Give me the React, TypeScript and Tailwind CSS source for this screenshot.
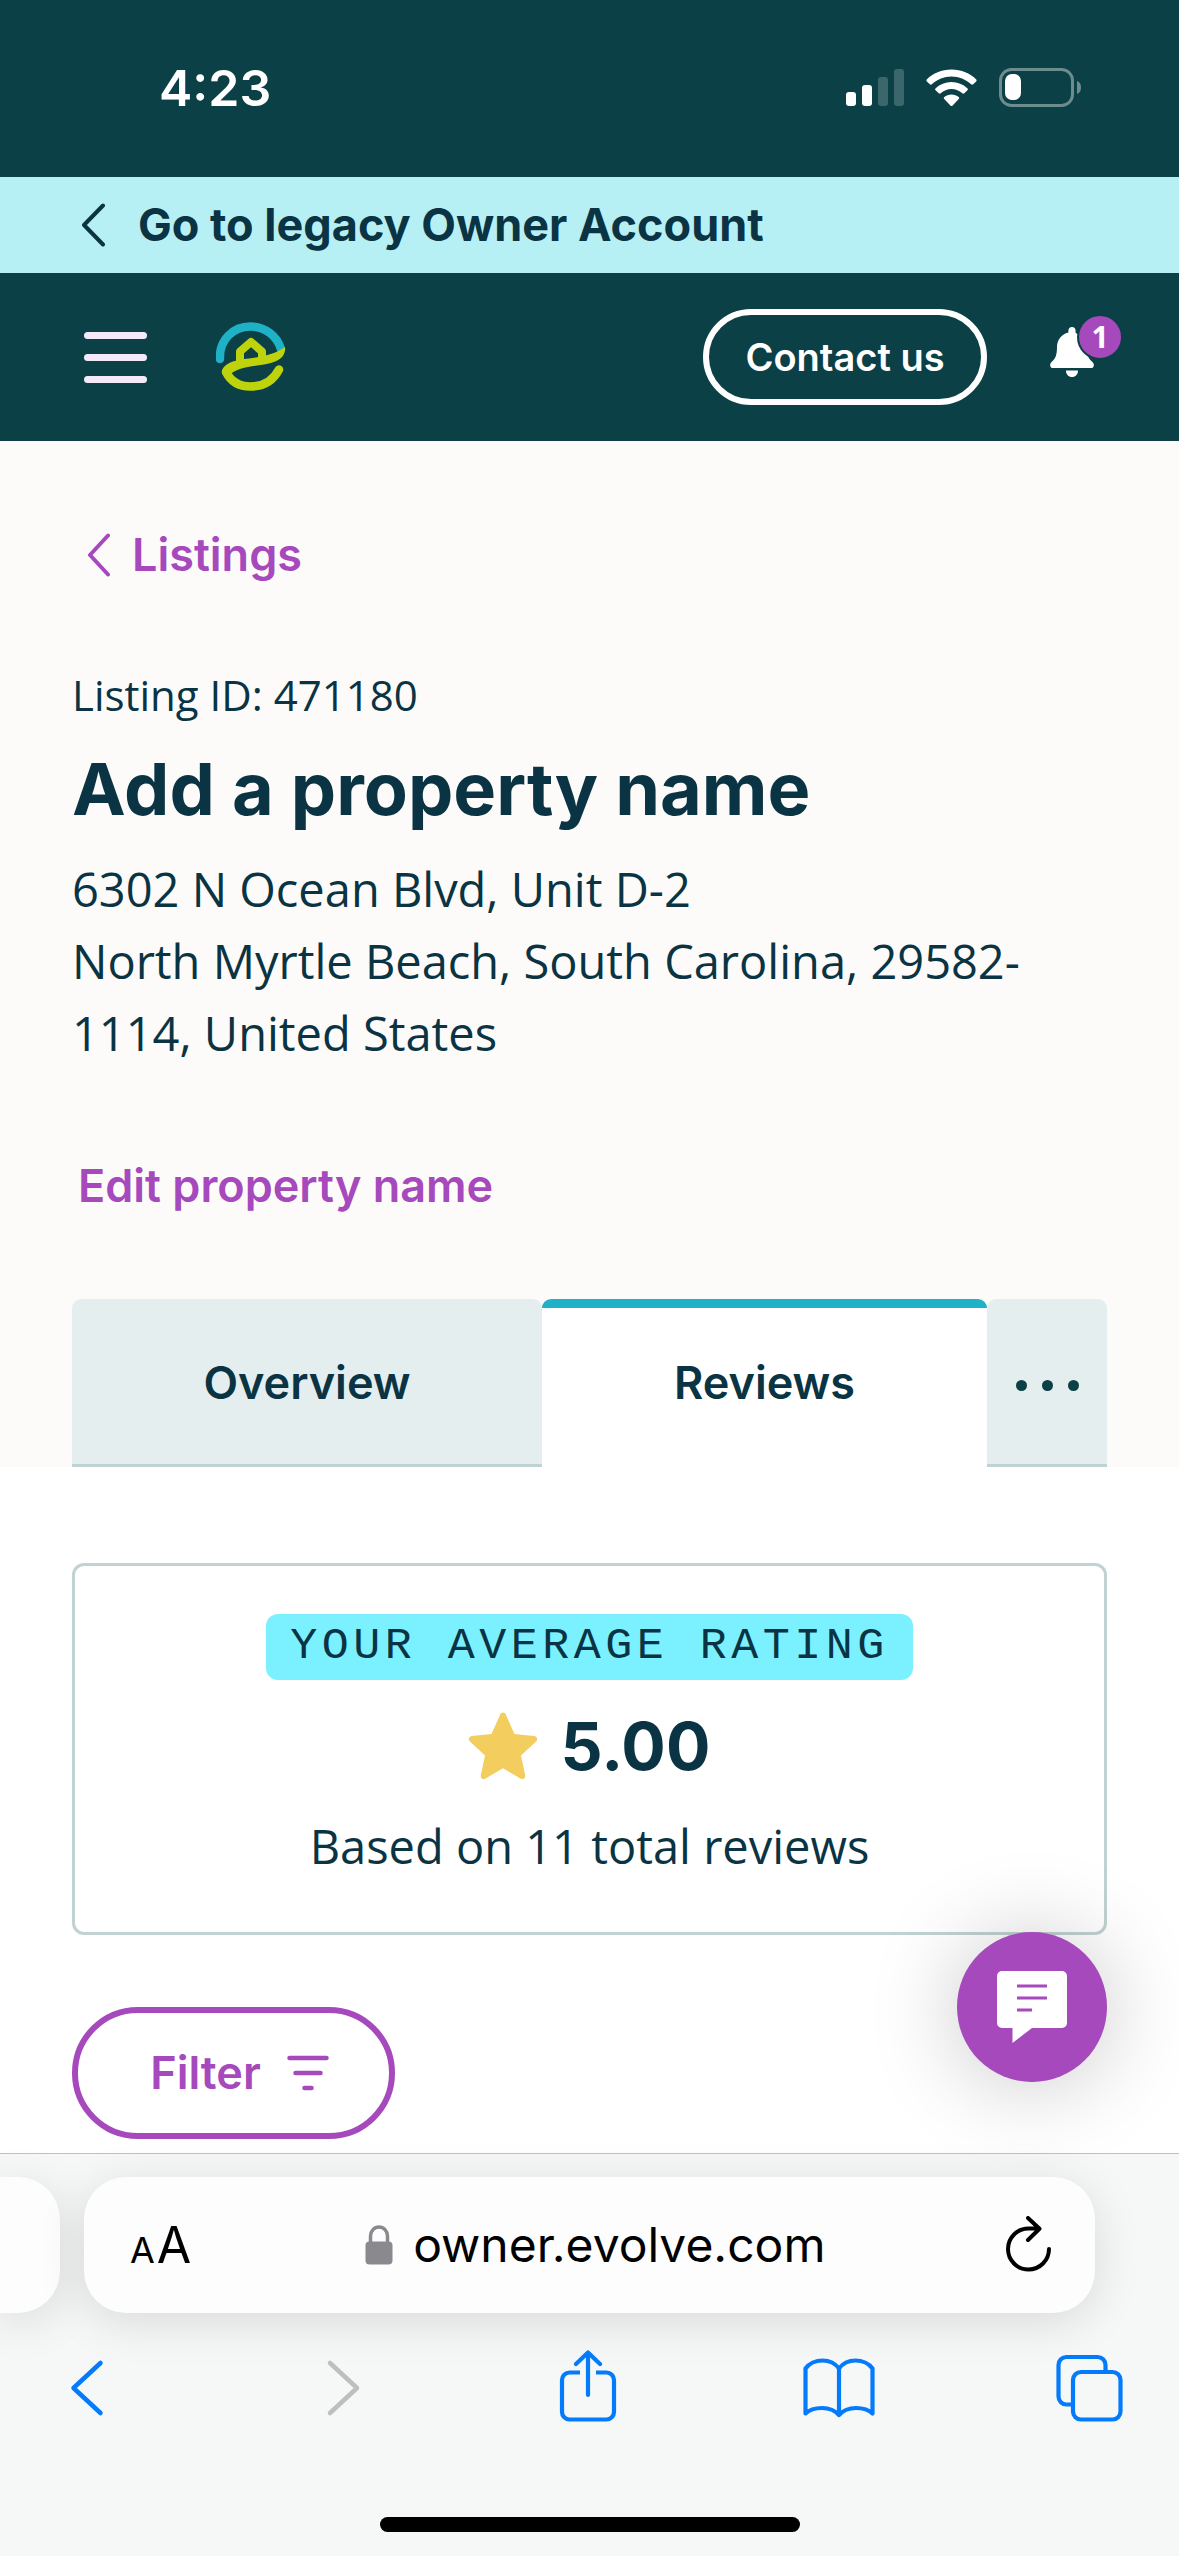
import React, { useState } from 'react';

type Tab = 'overview' | 'reviews';

const TABS: { id: Tab; label: string; className: string }[] = [
  { id: 'overview', label: 'Overview', className: 'grow-[470]' },
  { id: 'reviews', label: 'Reviews', className: 'grow-[445]' },
];

const StatusBar = () => (
  <div className="flex h-[177px] items-start justify-between bg-[#0b4046] pl-[159px] pr-[97px] pt-[58px] text-white">
    <span className="text-[50px] leading-[60px] font-semibold">4:23</span>
    <div className="flex items-center gap-[22px] pt-[10px]">
      <svg className="h-[38px] w-[58px]" viewBox="0 0 58 38" fill="#fff">
        <rect x="0" y="23" width="10" height="14" rx="3" />
        <rect x="16" y="16" width="10" height="21" rx="3" />
        <rect x="32" y="8" width="10" height="29" rx="3" opacity="0.2" />
        <rect x="48" y="0" width="10" height="37" rx="3" opacity="0.2" />
      </svg>
      <svg className="h-[38px] w-[51px]" viewBox="0 0 51 38" fill="#fff">
        <path d="M25.500 .5C35.500 .5 44 4.300 50 10.200c.8.8.8 1.500.1 2.200l-2.900 2.900c-.7.700-1.400.6-2.100 0C39.800 10.300 33 7.500 25.500 7.500S11.200 10.300 5.900 15.300c-.7.600-1.400.7-2.100 0L.9 12.400c-.7-.7-.7-1.400.1-2.200C7 4.300 15.500.5 25.500.5z" />
        <path d="M25.500 13c6.200 0 11.600 2.300 15.800 6.200.8.7.8 1.400.1 2.100l-3.100 3c-.7.700-1.300.6-2 0-2.900-2.600-6.600-4.200-10.800-4.200s-7.900 1.600-10.800 4.200c-.7.600-1.300.7-2 0l-3.100-3c-.7-.7-.7-1.400.1-2.100 4.200-3.900 9.600-6.200 15.800-6.200z" />
        <path d="M25.500 25.500c2.800 0 5.200 1 7.200 2.600.7.600.7 1.200.1 1.800l-6.200 6.600c-.7.700-1.500.7-2.200 0l-6.200-6.600c-.6-.6-.6-1.200.1-1.800 2-1.600 4.400-2.600 7.200-2.600z" />
      </svg>
      <svg className="h-[39px] w-[83px]" viewBox="0 0 83 39" fill="none">
        <rect x="1.500" y="1.500" width="72" height="36" rx="11" stroke="#fff" strokeOpacity="0.4" strokeWidth="3" />
        <rect x="6" y="6" width="16" height="26" rx="7" fill="#fff" />
        <path d="M78 13c3 1.200 4 3.500 4 6.500s-1 5.300-4 6.500z" fill="#fff" fillOpacity="0.4" />
      </svg>
    </div>
  </div>
);

const EvolveLogo = () => (
  <svg className="h-[70px] w-[70px]" viewBox="36 32 70 70" fill="none" strokeLinecap="round">
    <path d="M40 69C39 50 53 36.500 70.500 36.500 85 36.500 97 46 101 59" stroke="#1fb1c6" strokeWidth="8.500" />
    <path d="M60 73V61.500L71 52l11 9.500V68" stroke="#bfd30c" strokeWidth="8" strokeLinejoin="round" />
    <path d="M105 57c1 10-6 15-21 17.500C68 77 58 77 48 86l-6-6c4-8 14-10 27-11.500C85 66.500 96 63.500 105 57z" fill="#bfd30c" />
    <path d="M46 82c5 10 14 14.500 24.500 14.500C83 96.500 93 91 99 79.500" stroke="#bfd30c" strokeWidth="8.500" />
  </svg>
);

const NavBar = () => (
  <nav className="flex h-[168px] items-center bg-[#0b4046] pl-[84px] pr-[58px]">
    <button type="button" aria-label="Menu" className="flex w-[63px] flex-col gap-[15px]">
      <span className="h-[7px] rounded-full bg-[#f3e9f8]" />
      <span className="h-[7px] rounded-full bg-[#f3e9f8]" />
      <span className="h-[7px] rounded-full bg-[#f3e9f8]" />
    </button>
    <a href="#home" aria-label="Evolve" className="ml-[69px]">
      <EvolveLogo />
    </a>
    <button type="button" className="ml-auto h-24 w-[284px] rounded-full border-[6px] border-white text-[38px] font-semibold text-white">
      Contact us
    </button>
    <button type="button" aria-label="Notifications" className="relative mb-[10px] ml-[63px] h-[50px] w-[71px]">
      <svg className="h-[50px] w-[44px]" viewBox="0 0 44 50" fill="#fff">
        <path d="M22 0c2.200 0 3.600 1.500 3.600 3.800V6C32 8 36.500 13 36.500 20c0 8 2 11.500 5.700 14.700 2.600 2.300 2.200 6.300-1.400 6.300H3.200C-.4 41-.8 37 1.800 34.700 5.500 31.500 7 28 7 20 7 13 11.500 7 18.400 5.500V3.800C18.400 1.500 19.800 0 22 0zM16 43.500h12c0 4-2.500 6.500-6 6.500s-6-2.500-6-6.500z" />
      </svg>
      <span className="absolute -top-[13px] left-[27px] flex h-[46px] w-[46px] items-center justify-center rounded-full border-2 border-[#0b4046] bg-[#a549bc] font-['Noto_Sans',sans-serif] text-[30px] leading-none font-bold text-white">
        1
      </span>
    </button>
  </nav>
);

const ListingHeader = () => (
  <header className="px-[72px] pt-[84px]">
    <a href="#listings" className="flex items-center gap-[22px] pl-[14px] text-[45px] leading-[60px] font-semibold text-[#a549bc]">
      <svg className="h-[44px] w-6" viewBox="0 0 24 44" fill="none" stroke="currentColor" strokeWidth="4" strokeLinecap="round" strokeLinejoin="round">
        <path d="M22 2.500L4 22l18 19.500" />
      </svg>
      Listings
    </a>
    <p className="mt-[80px] font-['Open_Sans',sans-serif] text-[42px] leading-[60px]">Listing ID: 471180</p>
    <h1 className="mt-[22px] text-[72px] leading-[84px] font-bold">Add a property name</h1>
    <address className="mt-[22px] font-['Open_Sans',sans-serif] text-[47px] leading-[72px] not-italic">
      6302 N Ocean Blvd, Unit D-2
      <br />
      North Myrtle Beach, South Carolina, 29582-
      <br />
      1114, United States
    </address>
    <button type="button" className="mt-[87px] block pl-[6px] text-[45px] leading-[60px] font-semibold text-[#a549bc]">
      Edit property name
    </button>
  </header>
);

const ReviewSummary = () => (
  <section className="flex flex-col items-center rounded-xl border-[3px] border-[#c0d2d1] pt-12 pb-[50px]">
    <h2 className="rounded-xl bg-[#7bf1ff] px-6 font-['Liberation_Mono',monospace] text-[45px] leading-[66px] tracking-widest">
      YOUR AVERAGE RATING
    </h2>
    <div className="mt-6 flex items-center gap-6">
      <svg className="h-[68px] w-[68px]" viewBox="0 0 68 68" fill="#f3cd5e">
        <path d="M31 3c1.200-3.200 4.800-3.200 6 0l8.500 19 19.500 2c3.300.4 4.200 3.600 1.800 5.800L52 43.500l4.200 19.700c.6 3.200-2 5-4.800 3.300L34 56.300 16.600 66.500c-2.800 1.700-5.400-.1-4.800-3.300L16 43.500 1.200 29.800C-1.200 27.600-.3 24.400 3 24l19.500-2z" />
      </svg>
      <span className="text-[66px] leading-[84px] font-bold">5.00</span>
    </div>
    <p className="mt-[22px] font-['Open_Sans',sans-serif] text-[47px] leading-[72px]">Based on 11 total reviews</p>
  </section>
);

const BrowserChrome = () => {
  const [address, setAddress] = useState('owner.evolve.com');

  return (
    <footer className="border-t border-[#bcc2c2] bg-[#f6f7f7] pt-[23px] pb-6 text-black">
      <div className="flex h-[136px] gap-6 pr-[84px]">
        <div className="w-[60px] rounded-r-[42px] bg-[#fdfdfd] shadow-[0_9px_48px_rgba(0,0,0,0.12)]" />
        <div className="flex flex-1 items-center justify-between rounded-[42px] bg-[#fdfdfd] pr-10 pl-[46px] shadow-[0_9px_48px_rgba(0,0,0,0.12)]">
          <button type="button" aria-label="Page settings" className="flex items-baseline gap-[2px] leading-none">
            <span className="text-[36px]">A</span>
            <span className="text-[50px]">A</span>
          </button>
          <div className="flex items-center gap-[20px]">
            <svg className="h-[40px] w-7" viewBox="0 0 28 40">
              <rect x="0.500" y="16.500" width="27" height="23" rx="4" fill="#8a8a8e" />
              <path d="M5.500 18v-7a8.500 9 0 0 1 17 0v7" fill="none" stroke="#8a8a8e" strokeWidth="3.500" />
            </svg>
            <input
              type="text"
              aria-label="Address"
              value={address}
              onChange={(e) => setAddress(e.target.value)}
              className="w-[416px] bg-transparent text-[48px] leading-[60px] outline-none"
            />
          </div>
          <button type="button" aria-label="Reload">
            <svg className="h-[58px] w-[52px]" viewBox="0 0 52 58" fill="none" stroke="#000" strokeWidth="4" strokeLinecap="round" strokeLinejoin="round">
              <path d="M46 33a20.500 20.500 0 1 1-20.500-20.500H36M25 2l11.500 10.700L25 24" />
            </svg>
          </button>
        </div>
      </div>

      <div className="mt-[37px] flex justify-between pr-[53px] pl-[50px] text-[#047bfb]">
        <button type="button" aria-label="Back" className="flex w-[74px] justify-center">
          <svg className="h-[72px] w-[62px]" viewBox="0 0 62 72" fill="none" stroke="currentColor" strokeWidth="4.500" strokeLinecap="round" strokeLinejoin="round">
            <path d="M44.500 13L17.500 38l27 25" />
          </svg>
        </button>
        <button type="button" aria-label="Forward" disabled className="flex w-[74px] justify-center text-[#bebfbf]">
          <svg className="h-[72px] w-[62px]" viewBox="0 0 62 72" fill="none" stroke="currentColor" strokeWidth="4.500" strokeLinecap="round" strokeLinejoin="round">
            <path d="M23 13l27 25-27 25" />
          </svg>
        </button>
        <button type="button" aria-label="Share" className="flex w-[74px] justify-center">
          <svg className="h-[72px] w-[62px]" viewBox="0 0 62 72" fill="none" stroke="currentColor" strokeWidth="4.200" strokeLinecap="round" strokeLinejoin="round">
            <path d="M23 22.500H12.500a7.500 7.500 0 0 0-7.500 7.500v32a7.500 7.500 0 0 0 7.500 7.500h37a7.500 7.500 0 0 0 7.500-7.500V30a7.500 7.500 0 0 0-7.500-7.500H39" strokeLinecap="butt" />
            <path d="M31 45V3M19 14L31 2.500 43 14" />
          </svg>
        </button>
        <button type="button" aria-label="Bookmarks" className="flex w-[74px] justify-center">
          <svg className="h-[72px] w-[74px]" viewBox="0 0 74 72" fill="none" stroke="currentColor" strokeWidth="4.200" strokeLinecap="round" strokeLinejoin="round">
            <path d="M37 18.500C33 13 27 10.500 20.500 10.500S7 13.500 3.500 18.500v45C7 60 13 58 20 58s13 2.500 17 7c4-4.500 10-7 17-7s13 2 16.500 5.500v-45C67 13.500 60 10.500 53.500 10.500S41 13 37 18.500zM37 18.500V64" />
          </svg>
        </button>
        <button type="button" aria-label="Tabs" className="flex w-[74px] justify-center">
          <svg className="h-[72px] w-[68px]" viewBox="0 0 68 72" fill="none" stroke="currentColor" strokeWidth="4.200">
            <rect x="18" y="22" width="47.500" height="47.500" rx="8" />
            <path d="M50.500 21.500V15a8 8 0 0 0-8-8h-31a8 8 0 0 0-8 8v31.500a8 8 0 0 0 8 8H17" />
          </svg>
        </button>
      </div>
      <div className="mx-auto mt-[95px] h-[15px] w-[420px] rounded-full bg-black" />
    </footer>
  );
};

const App: React.FC = () => {
  const [activeTab, setActiveTab] = useState<Tab>('reviews');

  return (
    <div className="flex min-h-screen flex-col bg-white font-['Inter',sans-serif] text-[#0a3443]">
      <StatusBar />
      <a href="#legacy" className="flex h-24 items-center gap-[33px] bg-[#b7f0f4] pl-[81px] text-[45px] font-bold">
        <svg className="h-[44px] w-6" viewBox="0 0 24 44" fill="none" stroke="currentColor" strokeWidth="4" strokeLinecap="round" strokeLinejoin="round">
          <path d="M22 2.500L3 22l19 19.500" />
        </svg>
        Go to legacy Owner Account
      </a>
      <NavBar />

      <div className="bg-[#fdfbf9]">
        <ListingHeader />
        <div role="tablist" className="mx-[72px] mt-[83px] flex h-[168px] text-[45px] font-semibold">
          {TABS.map((tab) => (
            <button
              key={tab.id}
              type="button"
              role="tab"
              aria-selected={activeTab === tab.id}
              onClick={() => setActiveTab(tab.id)}
              className={`basis-0 rounded-t-[9px] ${tab.className} ${
                activeTab === tab.id
                  ? 'border-t-[9px] border-[#1fb1c6] bg-white pb-[9px]'
                  : 'border-b-[3px] border-[#c0d2d1] bg-[#e5eeef] pt-[3px]'
              }`}
            >
              {tab.label}
            </button>
          ))}
          <button type="button" aria-label="More tabs" className="flex w-[120px] items-center justify-center gap-[15px] rounded-t-[9px] border-b-[3px] border-[#c0d2d1] bg-[#e5eeef] pt-2">
            <span className="h-[11px] w-[11px] rounded-full bg-[#0b4046]" />
            <span className="h-[11px] w-[11px] rounded-full bg-[#0b4046]" />
            <span className="h-[11px] w-[11px] rounded-full bg-[#0b4046]" />
          </button>
        </div>
      </div>

      <main className="relative flex-1 px-[72px] pt-24 pb-[14px]">
        <ReviewSummary />
        <button type="button" className="mt-[72px] flex h-[132px] w-[323px] items-center justify-center gap-[26px] rounded-full border-[6px] border-[#a549bc] pl-3 text-[45px] font-semibold text-[#a549bc]">
          Filter
          <svg className="h-[36px] w-[42px]" viewBox="0 0 42 36" fill="none" stroke="currentColor" strokeWidth="4.500" strokeLinecap="round">
            <path d="M2.500 3h37M8.500 18h25M17.500 33h7" />
          </svg>
        </button>
        <button
          type="button"
          aria-label="Open chat"
          className="absolute right-[72px] bottom-[71px] flex h-[150px] w-[150px] items-center justify-center rounded-full bg-[#a549bc] shadow-[0_3px_90px_rgba(0,0,0,0.22)]"
        >
          <svg className="h-[72px] w-[70px]" viewBox="0 0 70 72">
            <path d="M5 0h60a5 5 0 0 1 5 5v47a5 5 0 0 1-5 5H35L15.500 72V57H5a5 5 0 0 1-5-5V5a5 5 0 0 1 5-5z" fill="#fff" />
            <path d="M20 15h30M20 27h30M20 39h15" stroke="#a549bc" strokeWidth="3" />
          </svg>
        </button>
      </main>

      <BrowserChrome />
    </div>
  );
};

export default App;
